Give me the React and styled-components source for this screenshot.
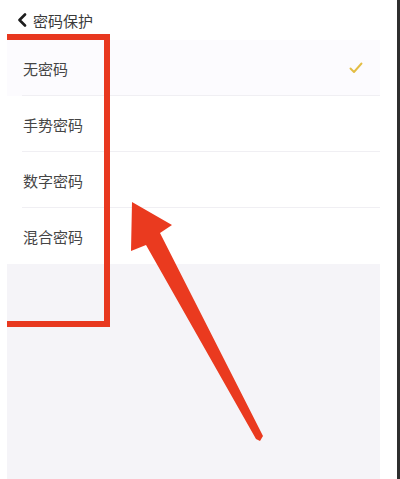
import styled, { createGlobalStyle } from "styled-components";

const GlobalStyle = createGlobalStyle`
  body {
    margin: 0;
    background: #fff;
    font-family: "Noto Sans CJK SC", "Noto Sans", sans-serif;
  }
`;

const Frame = styled.div`
  position: relative;
  width: 400px;
  height: 479px;
  box-sizing: border-box;
  padding-left: 7px;
  padding-right: 17px;
  border-right: 3px solid #2e2e2e;
  background: #fff;
  display: flex;
  overflow: hidden;
`;

const Screen = styled.div`
  position: relative;
  flex: 1;
  display: flex;
  flex-direction: column;
  background: #f5f4f8;
  overflow: hidden;
`;

const Header = styled.div`
  height: 40px;
  background: #fff;
  display: flex;
  align-items: center;
  gap: 5px;
  padding-left: 10px;
  color: #3a3a3a;
  font-size: 15px;
`;

const List = styled.div`
  background: #fff;
  display: flex;
  flex-direction: column;
`;

const Row = styled.div`
  position: relative;
  height: 56px;
  display: flex;
  align-items: center;
  justify-content: space-between;
  padding: 0 17px 0 16px;
  font-size: 15px;
  color: #454545;
  background: ${(p) => (p.$active ? "#fcfbfe" : "#fff")};
  box-sizing: border-box;

  &::after {
    content: "";
    display: ${(p) => (p.$last ? "none" : "block")};
    position: absolute;
    left: 15px;
    right: 0;
    bottom: 0;
    height: 1px;
    background: #f0eff3;
  }
`;

const Highlight = styled.div`
  position: absolute;
  left: -20px;
  top: 34px;
  width: 123px;
  height: 293px;
  border: 6px solid #e8381f;
  box-sizing: border-box;
  pointer-events: none;
`;

const ArrowLayer = styled.svg`
  position: absolute;
  left: 0;
  top: 0;
  pointer-events: none;
`;

const rows = ["无密码", "手势密码", "数字密码", "混合密码"];

export default function App() {
  return (
    <>
      <GlobalStyle />
      <Frame>
        <Screen>
          <Header>
            <svg width="11" height="14" viewBox="0 0 11 14">
              <path d="M8 1.5 L2.5 7 L8 12.5" fill="none" stroke="#1e1e1e" strokeWidth="2.6" strokeLinecap="round" strokeLinejoin="round" />
            </svg>
            <span>密码保护</span>
          </Header>
          <List>
            {rows.map((r, i) => (
              <Row key={r} $active={i === 0} $last={i === rows.length - 1}>
                <span>{r}</span>
                {i === 0 && (
                  <svg width="14" height="12" viewBox="0 0 14 12">
                    <path d="M1.5 6.5 L5 10 L12.5 1.5" fill="none" stroke="#e3bd44" strokeWidth="1.9" strokeLinecap="round" strokeLinejoin="round" />
                  </svg>
                )}
              </Row>
            ))}
          </List>
          <Highlight />
        </Screen>
        <ArrowLayer width="400" height="479" viewBox="0 0 400 479">
          <polygon
            points="132,202 172,225 160,233 263,436 260,441 256,439 146,245 131,251"
            fill="#ea3a1f"
          />
        </ArrowLayer>
      </Frame>
    </>
  );
}
